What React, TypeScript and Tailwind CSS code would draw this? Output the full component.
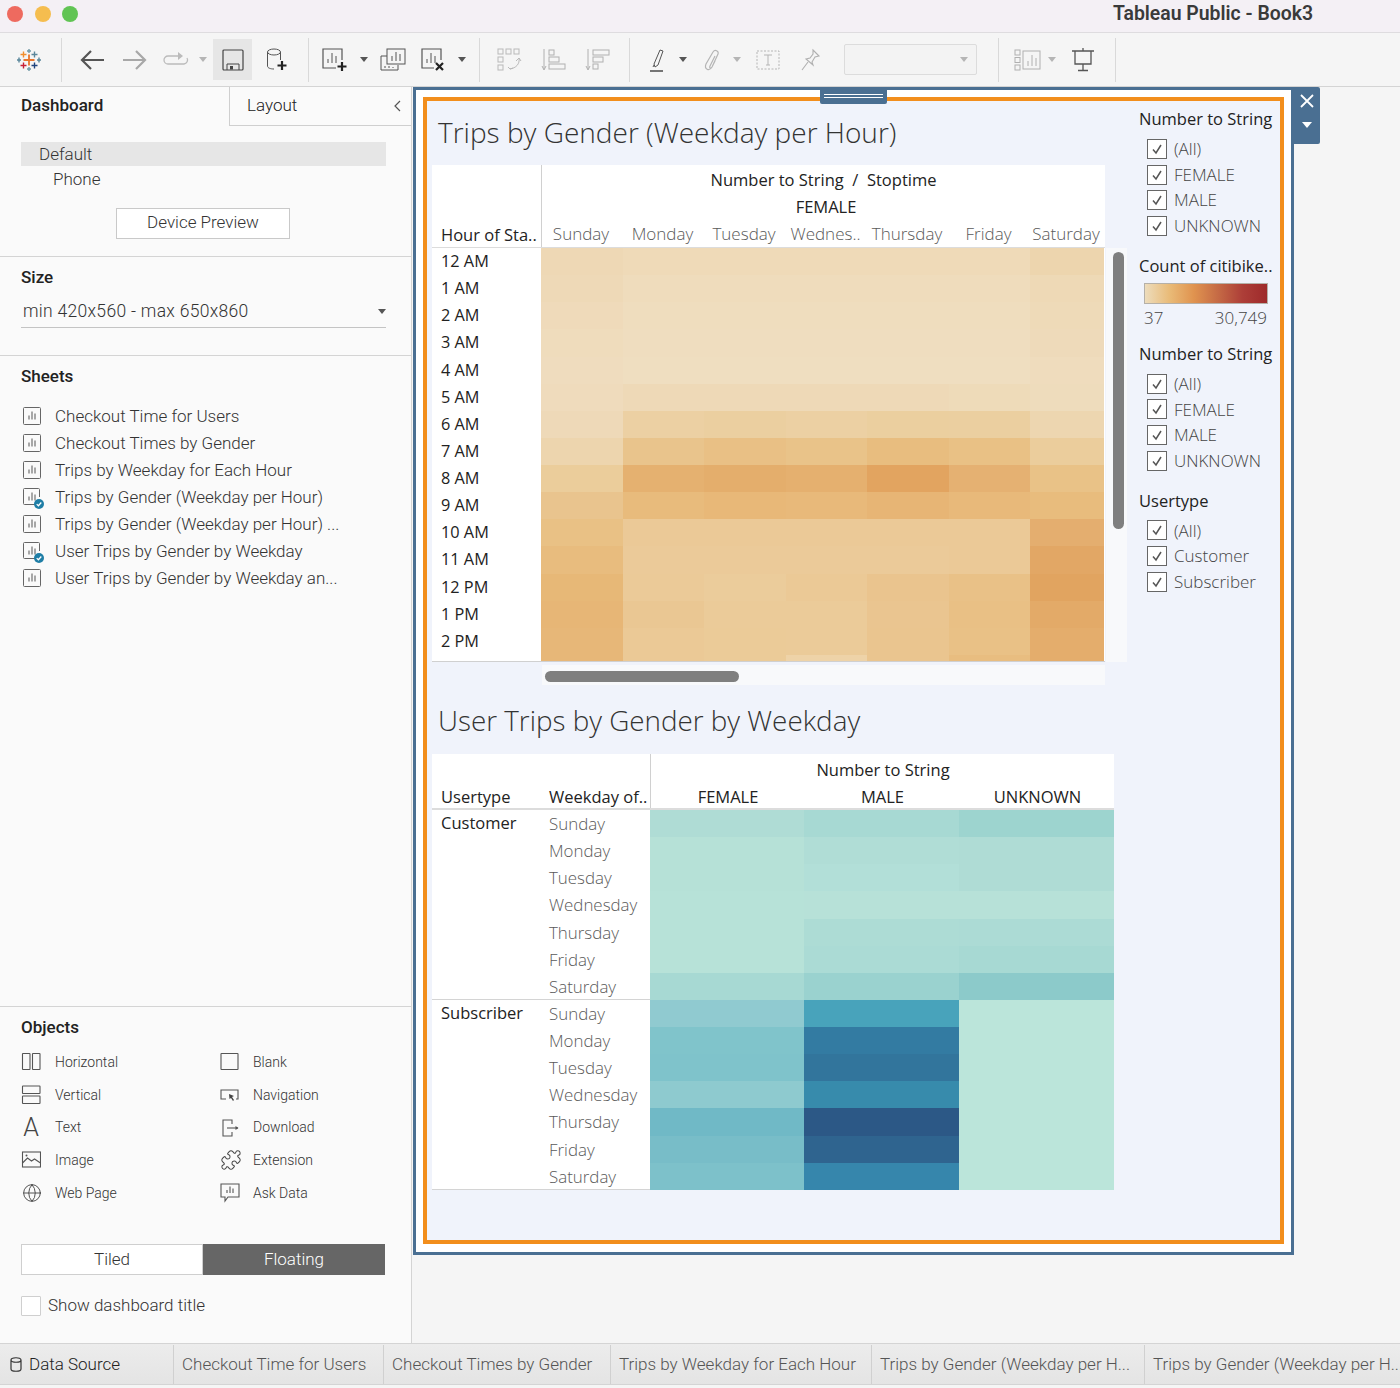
import React from "react";
import { Globe, Puzzle } from "lucide-react";

const SHEETS = [
  { name: "Checkout Time for Users", used: false },
  { name: "Checkout Times by Gender", used: false },
  { name: "Trips by Weekday for Each Hour", used: false },
  { name: "Trips by Gender (Weekday per Hour)", used: true },
  { name: "Trips by Gender (Weekday per Hour) ...", used: false },
  { name: "User Trips by Gender by Weekday", used: true },
  { name: "User Trips by Gender by Weekday an...", used: false },
];

const DAYS = ["Sunday", "Monday", "Tuesday", "Wednesday", "Thursday", "Friday", "Saturday"];

const HOUR_ROWS: { label: string; cells: string[] }[] = [
  { label: "12 AM", cells: ["#eed8b5", "#efdab8", "#efdab8", "#efdab8", "#efdab8", "#efdab8", "#edd5ae"] },
  { label: "1 AM", cells: ["#eed9b7", "#efdcbc", "#efdcbc", "#efdcbc", "#efdcbc", "#efdcbc", "#eed9b6"] },
  { label: "2 AM", cells: ["#efdaba", "#efddbe", "#efddbe", "#efddbe", "#efddbe", "#efddbe", "#eedab8"] },
  { label: "3 AM", cells: ["#efdcbc", "#efddbf", "#efddbf", "#efddbf", "#efddbf", "#efddbf", "#eedaba"] },
  { label: "4 AM", cells: ["#efdcbe", "#efdec0", "#efdec0", "#efdec0", "#efdec0", "#efdec0", "#efdcbd"] },
  { label: "5 AM", cells: ["#efdbbc", "#eed9b7", "#eed9b7", "#eed9b7", "#eed9b7", "#eedbb9", "#eedcbc"] },
  { label: "6 AM", cells: ["#eed9b8", "#ecd0a3", "#ebcfa0", "#ecd0a3", "#ebcf9f", "#ebcfa0", "#edd6b0"] },
  { label: "7 AM", cells: ["#edd5ae", "#e9c48c", "#e9c085", "#e9c389", "#e8bd7f", "#e9c185", "#ebcd9c"] },
  { label: "8 AM", cells: ["#ebcd9b", "#e5b170", "#e4ae6c", "#e5b06f", "#e2a460", "#e5b172", "#e9c287"] },
  { label: "9 AM", cells: ["#e9c48e", "#e8bb7c", "#e8b878", "#e8b97a", "#e7b575", "#e8b97a", "#e8bc7d"] },
  { label: "10 AM", cells: ["#e9c185", "#ebc997", "#ebc997", "#ebc997", "#ebc997", "#ebc997", "#e4ae6f"] },
  { label: "11 AM", cells: ["#e8bc7e", "#ebca99", "#ebca99", "#ebca99", "#ebca99", "#ebc997", "#e2a765"] },
  { label: "12 PM", cells: ["#e7b877", "#ebca98", "#ebcc9b", "#ebc996", "#eac48e", "#e9c187", "#e1a460"] },
  { label: "1 PM", cells: ["#e7b676", "#eac793", "#ebcb99", "#ebcb99", "#eac590", "#e9c085", "#e3aa68"] },
  { label: "2 PM", cells: ["#e7b778", "#ebc996", "#ebcb98", "#ebcb99", "#eac58f", "#e9c186", "#e4ad6c"] },
];

const PARTIAL_ROW = ["#e7b778", "#ebc996", "#ebcb98", "#eed3a8", "#eac58f", "#e8bd80", "#e4ad6c"];

const CUSTOMER = [
  ["#afdcd5", "#a7d9d3", "#9dd4cf"],
  ["#b6e1d7", "#b0ddd6", "#afdcd5"],
  ["#b6e1d7", "#b2dfd8", "#afdcd5"],
  ["#b7e2d8", "#b7e1d8", "#b7e1d8"],
  ["#b7e2d8", "#addcd5", "#acdbd5"],
  ["#b7e2d8", "#abdbd5", "#a7d9d3"],
  ["#a7d9d3", "#9ad2cf", "#8ccaca"],
];

const SUBSCRIBER = [
  ["#90cad0", "#48a3bb", "#bbe5da"],
  ["#80c4cb", "#337ba2", "#bbe5da"],
  ["#7fc3cb", "#32759c", "#bbe5da"],
  ["#8ecacf", "#378bac", "#bbe5da"],
  ["#70b9c6", "#2c5886", "#bbe5da"],
  ["#78bdc8", "#2f648f", "#bbe5da"],
  ["#7dc1ca", "#3686ac", "#bbe5da"],
];

const Caret = ({ light }: { light?: boolean }) => (
  <svg width="8" height="5" viewBox="0 0 8 5" className="block">
    <path d="M0 0h8L4 5z" fill={light ? "#b5b5b5" : "#555"} />
  </svg>
);

const TableauLogo = () => (
  <svg width="24" height="24" viewBox="0 0 24 24" className="block" strokeWidth="1.4" fill="none">
    <path d="M12 6.5v11M6.5 12h11" stroke="#e8762c" strokeWidth="1.8" />
    <path d="M6.5 3.5v6M3.5 6.5h6" stroke="#f28e2b" />
    <path d="M17.5 3.5v6M14.5 6.5h6" stroke="#5b879b" />
    <path d="M6.5 14.5v6M3.5 17.5h6" stroke="#c72037" />
    <path d="M17.5 14.5v6M14.5 17.5h6" stroke="#1f447e" />
    <path d="M12 1v4M10 3h4M12 19v4M10 21h4" stroke="#7099a6" />
    <path d="M2 9.5v5M0 12h4M22 9.5v5M20 12h4" stroke="#59879b" />
  </svg>
);

const ChartGlyph = ({ x, y, color = "#555" }: { x: number; y: number; color?: string }) => (
  <path d={`M${x} ${y + 8}v-4M${x + 3} ${y + 8}v-8M${x + 6} ${y + 8}v-6`} stroke={color} strokeWidth="1" fill="none" />
);

const SheetIcon = ({ used }: { used: boolean }) => (
  <svg width="22" height="22" viewBox="0 0 22 22" className="block shrink-0 ml-[1px]">
    {used ? (
      <path d="M15 17.5H2.5a1 1 0 0 1-1-1V2.5a1 1 0 0 1 1-1h14a1 1 0 0 1 1 1V10" fill="none" stroke="#666" />
    ) : (
      <rect x="1.5" y="1.5" width="17" height="17" rx="1" fill="none" stroke="#666" />
    )}
    <ChartGlyph x={7} y={5.500} />
    {used && (
      <g>
        <circle cx="17" cy="17" r="5" fill="#1f7ea6" />
        <path d="M14.700 17.100l1.700 1.600 2.900-3.200" fill="none" stroke="#fff" strokeWidth="1.3" />
      </g>
    )}
  </svg>
);

const ObjectIcon = ({ kind }: { kind: string }) => {
  const common = { fill: "none", stroke: "#555", strokeWidth: 1.1 };
  if (kind === "Text") {
    return <span className="block w-[20px] text-center text-[25px] leading-[20px] font-light text-[#444]">A</span>;
  }
  if (kind === "Web Page") {
    return <Globe size={20} strokeWidth={1.1} color="#444" className="ml-[1px]" />;
  }
  if (kind === "Extension") {
    return <Puzzle size={22} strokeWidth={1.1} color="#444" />;
  }
  return (
    <svg width="20" height="20" viewBox="0 0 20 20" className="block">
      {kind === "Horizontal" && (
        <g {...common}>
          <rect x="1.500" y="1.500" width="7.500" height="16" rx="0.5" />
          <rect x="11.500" y="1.500" width="7.500" height="16" rx="0.5" />
        </g>
      )}
      {kind === "Vertical" && (
        <g {...common}>
          <rect x="1.500" y="1" width="17.500" height="7.5" rx="0.5" />
          <rect x="1.500" y="11" width="17.500" height="7.5" rx="0.5" />
        </g>
      )}
      {kind === "Image" && (
        <g {...common}>
          <rect x="1.500" y="2" width="18" height="15" />
          <path d="M1.500 13l5-5 4 3 3-2 6 4" />
          <circle cx="5.500" cy="5.500" r="1" fill="#555" stroke="none" />
        </g>
      )}
      {kind === "Blank" && <rect x="1" y="1.5" width="17" height="16" rx="0.5" {...common} />}
      {kind === "Navigation" && (
        <g {...common}>
          <path d="M6 14H1V5h17v9h-2" />
          <path d="M9 9l5 2-2 1 2 3-1 1-2-3-1.500 1z" fill="#444" stroke="none" />
        </g>
      )}
      {kind === "Download" && (
        <g {...common}>
          <path d="M12 6V2H3v16h9v-4" />
          <path d="M7 10h11" />
          <path d="M15.500 8l3 2-3 2z" fill="#555" stroke="none" />
        </g>
      )}
      {kind === "Ask Data" && (
        <g {...common}>
          <path d="M1 1h18v13h-11l-3 4v-4H1z" />
          <path d="M7 10V7M10 10V3.500M13 10V5.500" />
        </g>
      )}
    </svg>
  );
};

const LeftObjects = ["Horizontal", "Vertical", "Text", "Image", "Web Page"];
const RightObjects = ["Blank", "Navigation", "Download", "Extension", "Ask Data"];

const ToolSep = ({ className }: { className: string }) => (
  <div className={`w-px h-[44px] bg-[#d9d9d9] shrink-0 ${className}`} />
);

const Toolbar = () => (
  <div className="h-[54px] shrink-0 flex items-center bg-[#f5f5f5] border-b border-[#d4d4d4] pl-[17px]">
    <TableauLogo />
    <ToolSep className="ml-[20px]" />
    <svg width="24" height="22" viewBox="0 0 24 22" className="ml-[18px] shrink-0">
      <path d="M24 11H2M11 2l-9 9 9 9" fill="none" stroke="#555" strokeWidth="2.200" />
    </svg>
    <svg width="24" height="22" viewBox="0 0 24 22" className="ml-[19px] shrink-0">
      <path d="M0 11h22M13 2l9 9-9 9" fill="none" stroke="#a8a8a8" strokeWidth="2.200" />
    </svg>
    <svg width="26" height="16" viewBox="0 0 26 16" className="ml-[16px] shrink-0">
      <path d="M15 4H5a4 4 0 0 0 0 8h16a4 4 0 0 0 3-6" fill="none" stroke="#bbb" strokeWidth="1.300" />
      <path d="M15 0l5 4-5 4z" fill="#bbb" />
    </svg>
    <div className="ml-[10px] shrink-0"><Caret light /></div>
    <div className="ml-[6px] w-[39px] h-[41px] bg-[#e6e6e6] shrink-0 flex items-center justify-center">
      <svg width="22" height="22" viewBox="0 0 22 22">
        <rect x="1" y="1" width="20" height="20" rx="1" fill="none" stroke="#444" strokeWidth="1.200" />
        <path d="M5 21v-6h12v6" fill="none" stroke="#444" />
        <rect x="8" y="17" width="3" height="3.500" fill="#444" />
      </svg>
    </div>
    <svg width="23" height="24" viewBox="0 0 23 24" className="ml-[13px] shrink-0">
      <ellipse cx="9" cy="4" rx="6.500" ry="3" fill="none" stroke="#555" />
      <path d="M2.500 4v14c0 2 3 3 6.500 3M15.500 4v8" fill="none" stroke="#555" />
      <path d="M17 13v9M12.500 17.500h9" stroke="#222" strokeWidth="2.200" />
    </svg>
    <ToolSep className="ml-[20px]" />
    <svg width="28" height="24" viewBox="0 0 28 24" className="ml-[13px] shrink-0">
      <path d="M14 20H1V1h19v11" fill="none" stroke="#555" strokeWidth="1.200" />
      <path d="M6 15v-4M10 15V5M14 15V8" stroke="#555" fill="none" />
      <path d="M20 14v9M15.500 18.500h9" stroke="#222" strokeWidth="2.200" />
    </svg>
    <div className="ml-[10px] shrink-0"><Caret /></div>
    <svg width="26" height="24" viewBox="0 0 26 24" className="ml-[12px] shrink-0">
      <path d="M7 8H1v14h17v-5" fill="none" stroke="#555" />
      <rect x="7" y="1" width="18" height="15" fill="#f5f5f5" stroke="#555" />
      <path d="M12 13V8M16 13V4M20 13V6M5 20v-2M9 20v-2M13 20v-1" stroke="#555" fill="none" />
    </svg>
    <svg width="26" height="24" viewBox="0 0 26 24" className="ml-[15px] shrink-0">
      <path d="M13 20H1V1h19v11" fill="none" stroke="#555" strokeWidth="1.200" />
      <path d="M6 15v-4M10 15V5M14 15V8" stroke="#555" fill="none" />
      <path d="M15 15l7 7M22 15l-7 7" stroke="#222" strokeWidth="2.200" />
    </svg>
    <div className="ml-[11px] shrink-0"><Caret /></div>
    <ToolSep className="ml-[13px]" />
    <svg width="25" height="24" viewBox="0 0 25 24" className="ml-[17px] shrink-0" fill="none" stroke="#b9b9b9">
      <rect x="1" y="1" width="5" height="5" />
      <rect x="9" y="1" width="5" height="5" />
      <rect x="17" y="1" width="5" height="5" />
      <rect x="1" y="9" width="5" height="5" />
      <rect x="1" y="17" width="5" height="5" />
      <path d="M22 10c1 6-3 10-9 11M11 19l2 2 3-1M19 13l3-3 2 3" />
    </svg>
    <svg width="25" height="24" viewBox="0 0 25 24" className="ml-[19px] shrink-0" fill="none" stroke="#b0b0b0">
      <path d="M3 1v20M1 18l2 4 2-4" />
      <rect x="8" y="2" width="5" height="5" />
      <rect x="8" y="9" width="10" height="5" />
      <rect x="8" y="16" width="16" height="5" />
    </svg>
    <svg width="25" height="24" viewBox="0 0 25 24" className="ml-[19px] shrink-0" fill="none" stroke="#b0b0b0">
      <path d="M3 1v20M1 18l2 4 2-4" />
      <rect x="8" y="2" width="16" height="5" />
      <rect x="8" y="9" width="10" height="5" />
      <rect x="8" y="16" width="5" height="5" />
    </svg>
    <ToolSep className="ml-[19px]" />
    <svg width="20" height="24" viewBox="0 0 20 24" className="ml-[19px] shrink-0" fill="none" stroke="#555">
      <path d="M5 16L11 2l3 1-5 14-3 2zM4 19l1-2" />
      <path d="M1 23h13" strokeWidth="1.600" />
    </svg>
    <div className="ml-[10px] shrink-0"><Caret /></div>
    <svg width="20" height="24" viewBox="0 0 20 24" className="ml-[15px] shrink-0" fill="none" stroke="#b5b5b5" strokeWidth="1.200">
      <path d="M13 8l-5 10c-1 2 1 3 2 1l6-13c1-3-3-5-5-2L4 16c-2 5 3 8 6 3l3-6" />
    </svg>
    <div className="ml-[11px] shrink-0"><Caret light /></div>
    <svg width="24" height="20" viewBox="0 0 24 20" className="ml-[15px] shrink-0" fill="none">
      <rect x="1" y="1" width="22" height="18" stroke="#b5b5b5" strokeDasharray="2 1.500" />
      <path d="M8 5h8M12 5v10M10 15h4" stroke="#b5b5b5" />
    </svg>
    <svg width="22" height="24" viewBox="0 0 22 24" className="ml-[20px] shrink-0" fill="none" stroke="#b0b0b0" strokeWidth="1.100">
      <path d="M13 2l6 6-4 1-3 5 1 3-7-6 4-1 3-4zM8 14l-6 8" />
    </svg>
    <div className="ml-[22px] w-[133px] h-[31px] shrink-0 bg-[#f3f3f3] border border-[#dcdcdc] rounded-[2px] flex items-center justify-end pr-[8px]">
      <Caret light />
    </div>
    <ToolSep className="ml-[21px]" />
    <svg width="29" height="22" viewBox="0 0 29 22" className="ml-[15px] shrink-0" fill="none" stroke="#b0b0b0">
      <rect x="1" y="1" width="5" height="5" />
      <rect x="1" y="8.500" width="5" height="5" />
      <rect x="1" y="16" width="5" height="5" />
      <rect x="9" y="2" width="17" height="18" />
      <path d="M14 17v-5M18 17V6M22 17v-8" />
    </svg>
    <div className="ml-[5px] shrink-0"><Caret light /></div>
    <svg width="24" height="24" viewBox="0 0 24 24" className="ml-[15px] shrink-0" fill="none" stroke="#555" strokeWidth="1.300">
      <path d="M1 3h22M12 0v3M4 3v13h16V3M12 16v6M7 22.500h10" />
    </svg>
    <ToolSep className="ml-[20px]" />
  </div>
);

const Sidebar = () => (
  <aside className="w-[412px] shrink-0 bg-[#fafafa] border-r border-[#d4d4d4] flex flex-col font-['Roboto',sans-serif] text-[#333]">
    <div className="h-[40px] shrink-0 flex">
      <div className="w-[229px] pl-[21px] pt-[7px] text-[17px] font-medium text-[#222] leading-[22px]">Dashboard</div>
      <div className="flex-1 h-[39px] flex items-center justify-between pl-[17px] pr-[10px] border-l border-b border-[#cfcfcf] text-[17px] font-light text-[#222]">
        <span>Layout</span>
        <svg width="8" height="12" viewBox="0 0 8 12"><path d="M7 1L2 6l5 5" fill="none" stroke="#555" strokeWidth="1.200" /></svg>
      </div>
    </div>

    <div className="pt-[15px] h-[130px] shrink-0 border-b border-[#d4d4d4]">
      <div className="mx-[21px] w-[365px] h-[24px] bg-[#e6e6e6] pl-[18px] text-[17px] leading-[24px] font-light">Default</div>
      <div className="mt-[1px] pl-[53px] text-[17px] leading-[24px] font-light">Phone</div>
      <div className="mt-[17px] ml-[116px] w-[174px] h-[31px] bg-white border border-[#c9c9c9] text-center text-[17px] leading-[27px] font-light">
        Device Preview
      </div>
    </div>

    <div className="h-[99px] shrink-0 border-b border-[#d4d4d4] px-[21px] pt-[9px]">
      <div className="text-[17px] font-medium text-[#222] leading-[22px]">Size</div>
      <div className="mt-[10px] w-[365px] h-[30px] border-b border-[#c4c4c4] flex items-center justify-between pl-[2px] pb-[3px] text-[17.500px] font-light tracking-[0.3px]">
        <span>min 420x560 - max 650x860</span>
        <Caret />
      </div>
    </div>

    <div className="flex-1 border-b border-[#d4d4d4] px-[21px] pt-[9px]">
      <div className="text-[17px] font-medium text-[#222] leading-[22px]">Sheets</div>
      <div className="mt-[16px] flex flex-col">
        {SHEETS.map((s) => (
          <div key={s.name} className="h-[27.100px] flex items-center">
            <SheetIcon used={s.used} />
            <span className="ml-[11px] text-[17px] font-light whitespace-nowrap">{s.name}</span>
          </div>
        ))}
      </div>
    </div>

    <div className="h-[336px] shrink-0 px-[21px] pt-[9px]">
      <div className="text-[17px] font-medium text-[#222] leading-[22px]">Objects</div>
      <div className="mt-[8px] flex">
        <div className="w-[199px] flex flex-col">
          {LeftObjects.map((k) => (
            <div key={k} className="h-[32.700px] flex items-center">
              <div className="w-[34px] shrink-0"><ObjectIcon kind={k} /></div>
              <span className="text-[14px] font-light">{k}</span>
            </div>
          ))}
        </div>
        <div className="flex flex-col">
          {RightObjects.map((k) => (
            <div key={k} className="h-[32.700px] flex items-center">
              <div className="w-[33px] shrink-0"><ObjectIcon kind={k} /></div>
              <span className="text-[14px] font-light">{k}</span>
            </div>
          ))}
        </div>
      </div>
      <div className="mt-[35px] flex w-[364px] h-[31px] text-[17px] font-light">
        <div className="w-[182px] bg-white border border-[#cfcfcf] text-center leading-[29px]">Tiled</div>
        <div className="w-[182px] bg-[#666] text-white text-center leading-[31px]">Floating</div>
      </div>
      <div className="mt-[18px] flex items-center">
        <div className="w-[20px] h-[20px] bg-white border border-[#cfcfcf] rounded-[1px]" />
        <span className="ml-[7px] text-[17px] font-light">Show dashboard title</span>
      </div>
    </div>
  </aside>
);

const CheckRow = ({ label }: { label: string }) => (
  <div className="h-[25.700px] flex items-center pl-[8px]">
    <div className="w-[20px] h-[20px] bg-white border border-[#666] flex items-center justify-center">
      <svg width="14" height="14" viewBox="0 0 14 14">
        <path d="M3 7.500l3 3.500 5-8" fill="none" stroke="#555" strokeWidth="1.500" />
      </svg>
    </div>
    <span className="ml-[7px] text-[17px] text-[#444] font-light">{label}</span>
  </div>
);

const LegendTitle = ({ children, className }: { children: React.ReactNode; className: string }) => (
  <div className={`text-[16.500px] leading-[22px] text-[#222] whitespace-nowrap ${className}`}>{children}</div>
);

const Legends = () => (
  <div className="ml-[12px] w-[141px] shrink-0 pt-[7px]">
    <LegendTitle className="">Number to String</LegendTitle>
    <div className="mt-[6px]">
      {["(All)", "FEMALE", "MALE", "UNKNOWN"].map((l) => <CheckRow key={l} label={l} />)}
    </div>
    <LegendTitle className="mt-[16px]">Count of citibike..</LegendTitle>
    <div className="mt-[6px] ml-[5px] w-[124px] h-[21px] border border-[#b5b0a8] bg-[linear-gradient(to_right,#eddcbc,#e9bb78,#e0934f,#c56a45,#ad3e38,#9e2a2b)]" />
    <div className="mt-[3px] ml-[5px] w-[123px] flex justify-between text-[17px] leading-[22px] text-[#444] font-light">
      <span>37</span>
      <span>30,749</span>
    </div>
    <LegendTitle className="mt-[14px]">Number to String</LegendTitle>
    <div className="mt-[6px]">
      {["(All)", "FEMALE", "MALE", "UNKNOWN"].map((l) => <CheckRow key={l} label={l} />)}
    </div>
    <LegendTitle className="mt-[16px]">Usertype</LegendTitle>
    <div className="mt-[6px]">
      {["(All)", "Customer", "Subscriber"].map((l) => <CheckRow key={l} label={l} />)}
    </div>
  </div>
);

const HOUR_COLS = "grid-cols-[82px_81px_82px_81px_82px_81px_74px]";

const HourTable = () => (
  <div>
    <div className="flex">
      <div className="ml-[5px] w-[673px] bg-white">
        <div className="flex h-[83px] border-b border-[#dcdcdc]">
          <div className="w-[109px] shrink-0 flex items-end pl-[9px] text-[16.500px] leading-[24px] text-[#222] whitespace-nowrap">
            Hour of Sta..
          </div>
          <div className="flex-1 border-l border-[#d0d0d0] flex flex-col text-[16.500px] leading-[27px]">
            <div className="h-[28px] pt-[1px] text-center text-[#222]">Number to String&nbsp;&nbsp;/&nbsp;&nbsp;Stoptime</div>
            <div className="h-[28px] pl-[5px] text-center text-[#222]">FEMALE</div>
            <div className={`grid ${HOUR_COLS} -ml-[2px] text-[17px] text-[#5a5a5a] font-light`}>
              {["Sunday", "Monday", "Tuesday", "Wednes..", "Thursday", "Friday", "Saturday"].map((d) => (
                <span key={d} className="text-center whitespace-nowrap">{d}</span>
              ))}
            </div>
          </div>
        </div>
        {HOUR_ROWS.map((row) => (
          <div key={row.label} className="flex h-[27.130px]">
            <div className="w-[109px] shrink-0 pl-[9px] text-[16.300px] leading-[27px] text-[#222]">{row.label}</div>
            <div className={`flex-1 grid ${HOUR_COLS}`}>
              {row.cells.map((c, i) => <div key={i} style={{ backgroundColor: c }} />)}
            </div>
          </div>
        ))}
        <div className="flex h-[7px] border-b border-[#d0d0d0]">
          <div className="w-[109px] shrink-0" />
          <div className={`flex-1 grid ${HOUR_COLS}`}>
            {PARTIAL_ROW.map((c, i) => <div key={i} style={{ backgroundColor: c }} />)}
          </div>
        </div>
      </div>
      <div className="mt-[83px] ml-[1px] w-[21px] h-[414px] bg-[#f8f9fb] pt-[4px] pl-[7px]">
        <div className="w-[11px] h-[277px] rounded-full bg-[#7f7f7f]" />
      </div>
    </div>
    <div className="ml-[115px] mt-[3px] w-[563px] h-[20px] bg-[#f8f9fb] pt-[6px] pl-[3px]">
      <div className="w-[194px] h-[11px] rounded-full bg-[#7f7f7f]" />
    </div>
  </div>
);

const WeekdayRows = ({ name, rows }: { name: string; rows: string[][] }) => (
  <div className="flex shadow-[inset_0_-1px_0_#d4d4d4]">
    <div className="w-[108px] shrink-0 pl-[9px] text-[16.500px] leading-[26px] text-[#222]">{name}</div>
    <div className="flex-1">
      {rows.map((r, i) => (
        <div key={i} className="flex h-[27.140px]">
          <div className="w-[110px] shrink-0 pl-[9px] text-[16.900px] leading-[28px] text-[#5a5a5a] font-light">{DAYS[i]}</div>
          <div className="flex-1 grid grid-cols-[154px_155px_155px]">
            {r.map((c, j) => <div key={j} style={{ backgroundColor: c }} />)}
          </div>
        </div>
      ))}
    </div>
  </div>
);

const WeekdayTable = () => (
  <div className="ml-[5px] w-[682px] bg-white">
    <div className="flex h-[56px] border-b-2 border-[#dcdcdc]">
      <div className="w-[218px] shrink-0 flex items-end text-[16.500px] leading-[22px] text-[#222]">
        <span className="w-[117px] shrink-0 pl-[9px]">Usertype</span>
        <span className="whitespace-nowrap">Weekday of..</span>
      </div>
      <div className="flex-1 border-l border-[#d0d0d0] flex flex-col text-[16.500px] text-[#222]">
        <div className="h-[30px] shrink-0 pt-[2px] leading-[27px] text-center">Number to String</div>
        <div className="grid shrink-0 grid-cols-[154px_155px_155px] leading-[26px] text-center">
          <span>FEMALE</span>
          <span>MALE</span>
          <span>UNKNOWN</span>
        </div>
      </div>
    </div>
    <WeekdayRows name="Customer" rows={CUSTOMER} />
    <WeekdayRows name="Subscriber" rows={SUBSCRIBER} />
  </div>
);

const Canvas = () => (
  <main className="flex-1 bg-[#f5f5f5] pl-[1px]">
    <div className="relative w-[881px] h-[1168px] bg-white border-[3px] border-[#4a6f92] p-[7px] pb-[8px] font-['Open_Sans',sans-serif]">
      <div className="w-full h-full border-[4px] border-[#f28e1c] bg-[#f0f3fb] flex">
        <div className="w-[700px] shrink-0">
          <div className="h-[64px] pl-[11px] pb-[2px] flex items-center text-[28px] text-[#333] font-light whitespace-nowrap">
            Trips by Gender (Weekday per Hour)
          </div>
          <HourTable />
          <div className="h-[69px] pl-[11px] pt-[2px] flex items-center text-[27.800px] text-[#333] font-light whitespace-nowrap">
            User Trips by Gender by Weekday
          </div>
          <WeekdayTable />
        </div>
        <Legends />
      </div>

      <div className="absolute -top-[3px] left-[404px] w-[67px] h-[17px] bg-[#4a6f92] rounded-b-[2px] flex flex-col justify-center gap-[2px] px-[4px]">
        <div className="h-[1px] bg-white" />
        <div className="h-[1px] bg-white" />
      </div>
      <div className="absolute -top-[3px] left-[878px] w-[26px] h-[57px] bg-[#4a6f92] rounded-r-[2px] flex flex-col items-center pt-[7px]">
        <svg width="14" height="14" viewBox="0 0 14 14">
          <path d="M1 1l12 12M13 1L1 13" stroke="#fff" strokeWidth="1.800" />
        </svg>
        <svg width="10" height="6" viewBox="0 0 10 6" className="mt-[14px]">
          <path d="M0 0h10L5 6z" fill="#fff" />
        </svg>
      </div>
    </div>
  </main>
);

const TABS = [
  { name: "Checkout Time for Users", w: "w-[210px]" },
  { name: "Checkout Times by Gender", w: "w-[227px]" },
  { name: "Trips by Weekday for Each Hour", w: "w-[261px]" },
  { name: "Trips by Gender (Weekday per H...", w: "w-[273px]" },
  { name: "Trips by Gender (Weekday per H...", w: "w-[256px]" },
];

const TabBar = () => (
  <div className="h-[45px] shrink-0 bg-[#f5f5f5] font-['Roboto',sans-serif]">
    <div className="h-[42px] flex border-y border-[#d4d4d4] bg-[linear-gradient(#ececec,#e4e4e4)] text-[17px] font-light overflow-hidden pt-[1px]">
      <div className="w-[174px] shrink-0 border-r border-[#d0d0d0] flex items-center pl-[10px] text-[#222]">
        <svg width="12" height="15" viewBox="0 0 12 15" className="shrink-0">
          <path d="M1 3v9c0 3 10 3 10 0V3C11 0 1 0 1 3zm0 0c0 3 10 3 10 0" fill="none" stroke="#333" strokeWidth="1.200" />
        </svg>
        <span className="ml-[7px]">Data Source</span>
      </div>
      {TABS.map((t, i) => (
        <div key={i} className={`${t.w} shrink-0 border-r border-[#d0d0d0] flex items-center pl-[8px] text-[#555] whitespace-nowrap`}>
          {t.name}
        </div>
      ))}
    </div>
  </div>
);

export default function App() {
  return (
    <div className="w-[1400px] h-[1388px] flex flex-col overflow-hidden bg-[#f5f5f5]">
      <div className="h-[33px] shrink-0 bg-[#f4f0f5] border-b border-[#dedcdf] flex items-center justify-between pl-[7px] pr-[87px] pb-[5px]">
        <div className="flex gap-[11.500px]">
          <div className="w-[16px] h-[16px] rounded-full bg-[#ee6a5f]" />
          <div className="w-[16px] h-[16px] rounded-full bg-[#f5bd4f]" />
          <div className="w-[16px] h-[16px] rounded-full bg-[#61c454]" />
        </div>
        <span className="text-[19.400px] font-semibold text-[#3a3a3a] font-['Roboto',sans-serif]">Tableau Public - Book3</span>
      </div>
      <Toolbar />
      <div className="flex-1 flex min-h-0">
        <Sidebar />
        <Canvas />
      </div>
      <TabBar />
    </div>
  );
}
